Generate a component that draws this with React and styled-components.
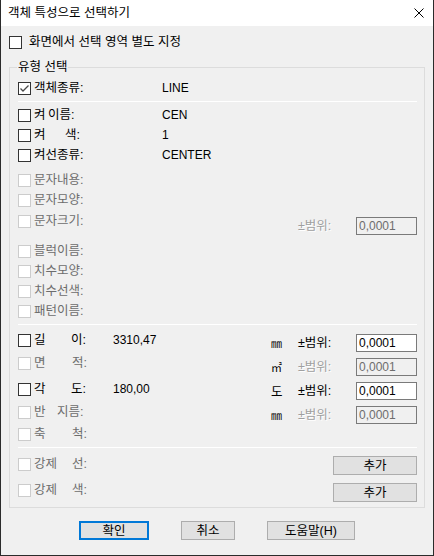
import React from 'react';
import styled, { createGlobalStyle } from 'styled-components';

const Global = createGlobalStyle`
  html, body { margin: 0; padding: 0; background: #1f1f1f; }
  body {
    font-family: "Liberation Sans", "Noto Sans CJK KR", sans-serif;
    font-size: 12.5px;
    color: #000;
  }
`;

const Window = styled.div`
  width: 434px;
  height: 556px;
  box-sizing: border-box;
  border: 1px solid #2b2b2b;
  border-top: none;
  background: #f0f0f0;
  display: flex;
  flex-direction: column;
  overflow: hidden;
`;

const TitleBar = styled.div`
  height: 26px;
  flex-shrink: 0;
  background: #fff;
  display: flex;
  align-items: center;
  justify-content: space-between;
  padding: 0 9px 0 7px;
`;

const Title = styled.span`
  font-size: 12.5px;
  line-height: 14px;
`;

const Body = styled.div`
  padding: 9px 8px 0 8px;
  display: flex;
  flex-direction: column;
`;

const Item = styled.div`
  display: flex;
  align-items: center;
  height: 14px;
  margin-top: ${p => (p.$mt === undefined ? 3 : p.$mt)}px;
  color: ${p => (p.$disabled ? '#6d6d6d' : '#000')};
  gap: ${p => p.$gap || 3}px;
`;

const Box = styled.span`
  width: 13px;
  height: 13px;
  box-sizing: border-box;
  flex-shrink: 0;
  border: 1px solid ${p => (p.$disabled ? '#cccccc' : '#333333')};
  background: #fff;
  display: inline-flex;
  align-items: center;
  justify-content: center;
`;

const Label = styled.span`
  display: flex;
  width: ${p => p.$w}px;
  white-space: nowrap;
  line-height: 14px;
`;

const Seg = styled.span`
  display: inline-block;
  width: ${p => p.$w}px;
`;

const Value = styled.span`
  line-height: 14px;
  font-size: 12px;
`;

const Group = styled.div`
  position: relative;
  margin-top: 18px;
  border: 1px solid #dcdcdc;
  padding: 10px 7px 5px 8px;
  display: flex;
  flex-direction: column;
`;

const Legend = styled.span`
  position: absolute;
  top: -8px;
  left: 7px;
  padding: 0 1px;
  background: #f0f0f0;
  line-height: 14px;
`;

const Row = styled.div`
  display: flex;
  align-items: flex-start;
  height: ${p => p.$h || 20}px;
  flex-shrink: 0;
`;

const Sep = styled.div`
  height: 1px;
  background: #ffffff;
  margin-top: ${p => p.$mt}px;
  margin-bottom: ${p => p.$mb || 0}px;
  flex-shrink: 0;
`;

const Gap = styled.div`
  height: ${p => p.$h}px;
  flex-shrink: 0;
`;

const Range = styled.div`
  margin-left: auto;
  margin-top: ${p => p.$mt}px;
  display: flex;
  align-items: center;
  height: 18px;
`;

const Unit = styled.span`
  width: 27px;
  line-height: 14px;
  font-family: "Noto Sans CJK KR", sans-serif;
  font-size: ${p => p.$size || 11}px;
`;

const RangeLabel = styled.span`
  width: 58px;
  line-height: 14px;
  color: ${p => (p.$disabled ? '#a0a0a0' : '#000')};
  text-shadow: ${p => (p.$disabled ? '1px 1px 0 #ffffff' : 'none')};
`;

const Field = styled.input`
  width: 61px;
  height: 18px;
  box-sizing: border-box;
  margin: 0;
  padding: 0 2px;
  border: 1px solid #7a7a7a;
  border-radius: 0;
  outline: none;
  font: inherit;
  font-size: 12px;
  background: ${p => (p.disabled ? '#f0f0f0' : '#ffffff')};
  color: ${p => (p.disabled ? '#6d6d6d' : '#000')};
  -webkit-text-fill-color: ${p => (p.disabled ? '#6d6d6d' : '#000')};
  opacity: 1;
`;

const Button = styled.button`
  width: ${p => p.$w}px;
  height: 19px;
  box-sizing: border-box;
  margin: 0;
  margin-top: ${p => p.$mt || 0}px;
  padding: 0;
  background: #e1e1e1;
  border: ${p => (p.$primary ? '2px solid #0078d7' : '1px solid #adadad')};
  border-radius: 0;
  font: inherit;
  line-height: 14px;
  color: #000;
  ${p => p.$right && 'margin-left: auto;'}
`;

const Footer = styled.div`
  margin-top: 13px;
  display: flex;
  justify-content: center;
  gap: 32px;
`;

function Check({ checked, disabled }) {
  return (
    <Box $disabled={disabled}>
      {checked && (
        <svg width="11" height="11" viewBox="0 0 11 11">
          <polyline points="1.5,5.5 4,8 9.5,2.5" fill="none" stroke="#4a4a4a" strokeWidth="1.3" />
        </svg>
      )}
    </Box>
  );
}

function RangeField({ value, disabled }) {
  return <Field defaultValue={value} disabled={disabled} readOnly />;
}

export default function App() {
  return (
    <>
      <Global />
      <Window>
        <TitleBar>
          <Title>객체 특성으로 선택하기</Title>
          <svg width="10" height="10" viewBox="0 0 10 10">
            <path d="M0.5 0.5 L9.5 9.5 M9.5 0.5 L0.5 9.5" stroke="#000" strokeWidth="1" />
          </svg>
        </TitleBar>
        <Body>
          <Item $mt={0} $gap={7}>
            <Check />
            <Label>화면에서 선택 영역 별도 지정</Label>
          </Item>

          <Group>
            <Legend>유형 선택</Legend>

            <Row>
              <Item>
                <Check checked />
                <Label $w={125}>객체종류:</Label>
                <Value>LINE</Value>
              </Item>
            </Row>
            <Sep $mt={3} $mb={3} />

            <Row>
              <Item>
                <Check />
                <Label $w={125}><Seg $w={14}>켜</Seg>이름:</Label>
                <Value>CEN</Value>
              </Item>
            </Row>
            <Row>
              <Item>
                <Check />
                <Label $w={125}><Seg $w={31}>켜</Seg>색:</Label>
                <Value>1</Value>
              </Item>
            </Row>
            <Row>
              <Item>
                <Check />
                <Label $w={125}>켜선종류:</Label>
                <Value>CENTER</Value>
              </Item>
            </Row>
            <Gap $h={5} />

            <Row>
              <Item $disabled>
                <Check disabled />
                <Label>문자내용:</Label>
              </Item>
            </Row>
            <Row $h={21}>
              <Item $disabled>
                <Check disabled />
                <Label>문자모양:</Label>
              </Item>
            </Row>
            <Row>
              <Item $disabled>
                <Check disabled />
                <Label>문자크기:</Label>
              </Item>
              <Range $mt={6}>
                <RangeLabel $disabled>±범위:</RangeLabel>
                <RangeField value="0,0001" disabled />
              </Range>
            </Row>
            <Gap $h={10} />

            {['블럭이름:', '치수모양:', '치수선색:', '패턴이름:'].map(t => (
              <Row key={t}>
                <Item $disabled>
                  <Check disabled />
                  <Label>{t}</Label>
                </Item>
              </Row>
            ))}
            <Sep $mt={3} />

            <Row $h={31}>
              <Item $mt={8}>
                <Check />
                <Label $w={76}><Seg $w={37}>길</Seg>이:</Label>
                <Value>3310,47</Value>
              </Item>
              <Range $mt={9}>
                <Unit>㎜</Unit>
                <RangeLabel>±범위:</RangeLabel>
                <RangeField value="0,0001" />
              </Range>
            </Row>
            <Row $h={24}>
              <Item $mt={0} $disabled>
                <Check disabled />
                <Label $w={76}><Seg $w={38}>면</Seg>적:</Label>
              </Item>
              <Range $mt={2}>
                <Unit>㎡</Unit>
                <RangeLabel $disabled>±범위:</RangeLabel>
                <RangeField value="0,0001" disabled />
              </Range>
            </Row>
            <Row $h={24}>
              <Item $mt={2}>
                <Check />
                <Label $w={76}><Seg $w={37}>각</Seg>도:</Label>
                <Value>180,00</Value>
              </Item>
              <Range $mt={2}>
                <Unit $size={12.5}>도</Unit>
                <RangeLabel>±범위:</RangeLabel>
                <RangeField value="0,0001" />
              </Range>
            </Row>
            <Row $h={22}>
              <Item $mt={1} $disabled>
                <Check disabled />
                <Label $w={76}><Seg $w={23}>반</Seg>지름:</Label>
              </Item>
              <Range $mt={2}>
                <Unit>㎜</Unit>
                <RangeLabel $disabled>±범위:</RangeLabel>
                <RangeField value="0,0001" disabled />
              </Range>
            </Row>
            <Row $h={15}>
              <Item $mt={1} $disabled>
                <Check disabled />
                <Label $w={76}><Seg $w={38}>축</Seg>척:</Label>
              </Item>
            </Row>
            <Sep $mt={6} />

            <Row $h={27}>
              <Item $mt={9} $disabled>
                <Check disabled />
                <Label><Seg $w={38}>강제</Seg>선:</Label>
              </Item>
              <Button $w={84} $mt={8} $right>추가</Button>
            </Row>
            <Row $h={27}>
              <Item $mt={8} $disabled>
                <Check disabled />
                <Label><Seg $w={38}>강제</Seg>색:</Label>
              </Item>
              <Button $w={84} $mt={8} $right>추가</Button>
            </Row>
          </Group>

          <Footer>
            <Button $w={70} $primary>확인</Button>
            <Button $w={54}>취소</Button>
            <Button $w={88}>도움말(H)</Button>
          </Footer>
        </Body>
      </Window>
    </>
  );
}
